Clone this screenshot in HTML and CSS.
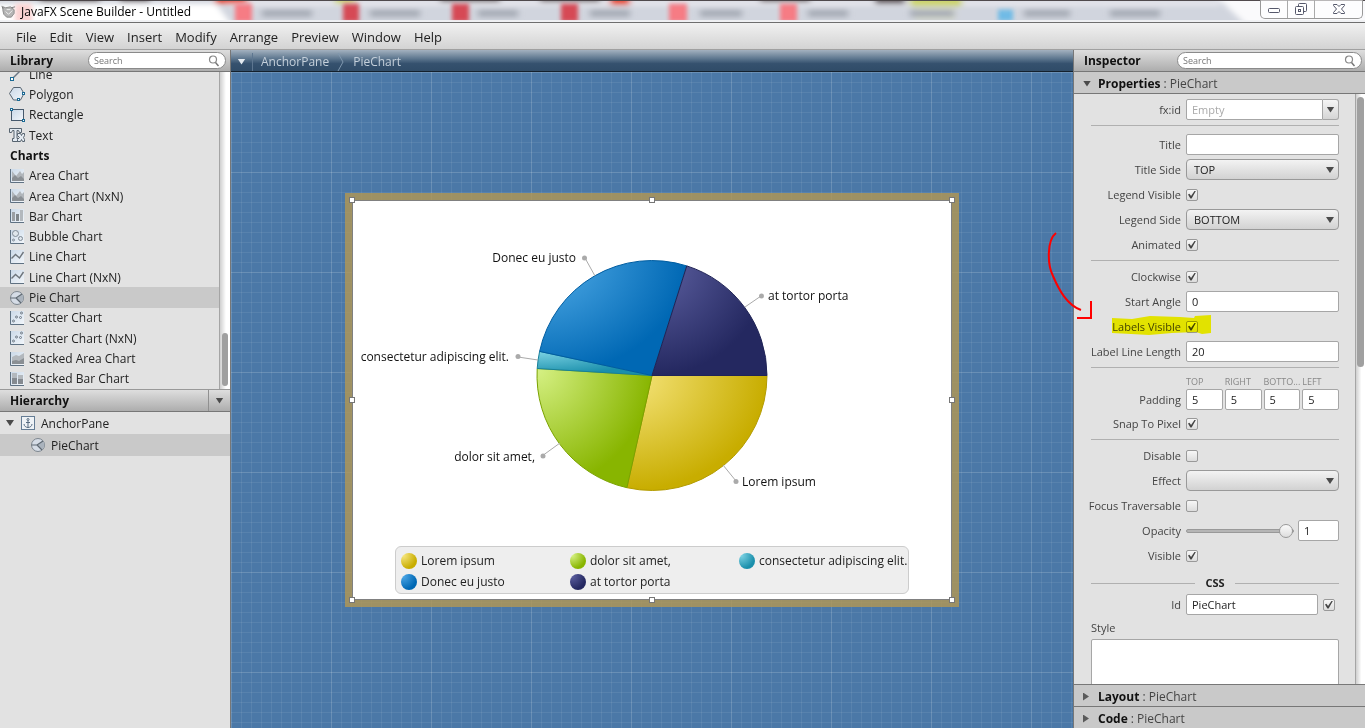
FILE: index.html
```html
<!DOCTYPE html>
<html lang="en">
<head>
  <meta charset="utf-8">
  <title>JavaFX Scene Builder - Untitled</title>
  <link rel="stylesheet" href="styles.css">
</head>
<body>
  <!-- icons shared by the library list and the hierarchy tree -->
  <svg class="defs" width="0" height="0" aria-hidden="true">
    <defs>
      <linearGradient id="iconFill" x1="0" y1="0" x2="1" y2="1">
        <stop offset="0" stop-color="#c9d8e8"/>
        <stop offset="1" stop-color="#f2f6fa"/>
      </linearGradient>
      <symbol id="i-line" viewBox="0 0 16 16">
        <path d="M3 13L13 3" stroke="#6b7784" stroke-width="1.4"/>
        <rect x="1.5" y="11.5" width="3" height="3" fill="#fff" stroke="#1b6a94"/>
        <rect x="11.5" y="1.5" width="3" height="3" fill="#fff" stroke="#1b6a94"/>
      </symbol>
      <symbol id="i-polygon" viewBox="0 0 16 16">
        <path d="M4.500 1.500h7l3.500 6-3.500 6.500h-7L.500 7.500z" fill="url(#iconFill)" stroke="#56636f"/>
        <rect x="13.500" y="6.500" width="2" height="2" fill="#fff" stroke="#1b6a94"/>
        <rect x="8.500" y="12.500" width="2" height="2" fill="#fff" stroke="#1b6a94"/>
      </symbol>
      <symbol id="i-rectangle" viewBox="0 0 16 16">
        <rect x="2.500" y="2.500" width="12" height="11" fill="url(#iconFill)" stroke="#46596c"/>
        <rect x="1.500" y="1.500" width="2" height="2" fill="#fff" stroke="#1b6a94"/>
        <rect x="13.500" y="12.500" width="2" height="2" fill="#fff" stroke="#1b6a94"/>
      </symbol>
      <symbol id="i-text" viewBox="0 0 16 16">
        <path d="M.500 1.500h12v4h-2l-1-2H8v8h2v3H3.500v-3H5v-8H3.500l-1 2h-2z" fill="#e3eaf1" stroke="#56636f"/>
        <path d="M8.500 6.500h3l1 2 1-2h2v2l-1 2 1 2v2h-2l-1-2-1 2h-3v-2l2-2-2-2z" fill="#e3eaf1" stroke="#56636f"/>
      </symbol>
      <symbol id="i-area" viewBox="0 0 16 16">
        <path d="M1 1h14v13H1z" fill="url(#iconFill)"/>
        <path d="M3 3l4 5 4-5 2 3 2-2v9H3z" fill="#b0b5ba"/>
        <path d="M3 10l3-3 3 3 3-2 3 3v2H3z" fill="#8a8f94"/>
        <path d="M1.500 1v13.500H15" fill="none" stroke="#5f7182"/>
      </symbol>
      <symbol id="i-bar" viewBox="0 0 16 16">
        <path d="M1 1h14v13H1z" fill="url(#iconFill)"/>
        <path d="M3 4h3v9H3z" fill="#9a9fa4"/>
        <path d="M7 6h3v7H7z" fill="#80868b"/>
        <path d="M11 2h3v11h-3z" fill="#b3b8bd"/>
        <path d="M1.500 1v13.500H15" fill="none" stroke="#5f7182"/>
      </symbol>
      <symbol id="i-bubble" viewBox="0 0 16 16">
        <path d="M1 1h14v13H1z" fill="url(#iconFill)"/>
        <circle cx="6.500" cy="4.500" r="3" fill="#dfe6ec" stroke="#7f8a95"/>
        <circle cx="11.500" cy="9.500" r="2" fill="#dfe6ec" stroke="#7f8a95"/>
        <circle cx="4.500" cy="11" r="1" fill="none" stroke="#7f8a95"/>
        <path d="M1.500 1v13.500H15" fill="none" stroke="#5f7182"/>
      </symbol>
      <symbol id="i-linechart" viewBox="0 0 16 16">
        <path d="M1 1h14v13H1z" fill="url(#iconFill)"/>
        <path d="M2.500 9.500l4-4 4 3.500 4-6" fill="none" stroke="#6e757c" stroke-width="1.400"/>
        <path d="M1.500 1v13.500H15" fill="none" stroke="#5f7182"/>
      </symbol>
      <symbol id="i-pie" viewBox="0 0 16 16">
        <circle cx="8" cy="8" r="6.500" fill="#d5dce6" stroke="#7d868f"/>
        <path d="M7 8l6-4a6 6 0 0 1-1 8.500z" fill="#aab3bd"/>
        <path d="M1.500 8H7l6-4M7 8l5 5" fill="none" stroke="#5e6872" stroke-width="1.200"/>
      </symbol>
      <symbol id="i-scatter" viewBox="0 0 16 16">
        <path d="M1 1h14v13H1z" fill="url(#iconFill)"/>
        <g fill="none" stroke="#6f7a86">
          <circle cx="4.500" cy="11" r="1"/>
          <circle cx="7.500" cy="7" r="1"/>
          <circle cx="11.500" cy="7.500" r="1"/>
          <circle cx="12.500" cy="3" r="1"/>
        </g>
        <path d="M1.500 1v13.500H15" fill="none" stroke="#5f7182"/>
      </symbol>
      <symbol id="i-stackarea" viewBox="0 0 16 16">
        <path d="M1 1h14v13H1z" fill="url(#iconFill)"/>
        <path d="M3 6l4-2 3 1 5-3v7L3 13z" fill="#b3b8bd"/>
        <path d="M3 10l4-1 3 1 5-3v6H3z" fill="#8a8f94"/>
        <path d="M1.500 1v13.500H15" fill="none" stroke="#5f7182"/>
      </symbol>
      <symbol id="i-stackbar" viewBox="0 0 16 16">
        <path d="M1 1h14v13H1z" fill="url(#iconFill)"/>
        <path d="M3 2h5v5H3zM9 4h5v4H9z" fill="#b3b8bd"/>
        <path d="M3 7h5v6H3zM9 8h5v5H9z" fill="#858a90"/>
        <path d="M1.500 1v13.500H15" fill="none" stroke="#5f7182"/>
      </symbol>
      <symbol id="i-anchor" viewBox="0 0 16 16">
        <rect x="1.500" y="1.500" width="13" height="13" fill="#eef2f6" stroke="#647c94"/>
        <circle cx="8" cy="4.500" r="1" fill="none" stroke="#566b80"/>
        <path d="M8 5.500v7M6 7.500h4M4 9c0 2 2 3.500 4 3.500s4-1.500 4-3.500" fill="none" stroke="#566b80"/>
      </symbol>
      <symbol id="i-search" viewBox="0 0 12 12">
        <circle cx="5" cy="4.500" r="3.500" fill="none" stroke="#888" stroke-width="1.200"/>
        <path d="M7.500 7.500L10.500 11" stroke="#777" stroke-width="1.500"/>
      </symbol>
    </defs>
  </svg>

  <header class="titlebar">
    <svg class="glass" viewBox="0 0 1365 23" preserveAspectRatio="none" aria-hidden="true">
      <defs>
        <filter id="soft" x="-5%" y="-50%" width="110%" height="200%"><feGaussianBlur stdDeviation="3"/></filter>
        <filter id="softer" x="-5%" y="-50%" width="110%" height="200%"><feGaussianBlur stdDeviation="2"/></filter>
      </defs>
      <rect width="1365" height="23" fill="#d1d5de"/>
      <g filter="url(#soft)">
        <path d="M-10 4H216l18 25H-10z" fill="#fff"/>
        <path d="M1215 -5h170v35H1250z" fill="#fafafc"/>
        <path d="M225 1H1220V6H225z" fill="#e9e8ee"/>
        <path d="M40 -4h60V2H40zM120 -4h30V2h-30zM440 -4h60V2h-60zM540 -4h60V2h-60zM760 -4h50V2h-50zM875 -4h30V4h-30z" fill="#5a5054"/>
        <path d="M215 -4h32V4h-32zM610 -4h20V5h-20z" fill="#e8452c"/>
        <path d="M335 -4h20V4h-20zM910 -4h52V6h-52z" fill="#ccd46a"/>
        <path d="M915 8h40v12h-40z" fill="#d9ddbf"/>
        <path d="M262 10h50v8h-50zM370 10h50v8h-50zM478 10h40v8h-40zM590 10h40v8h-40zM700 10h42v8h-42zM808 10h40v8h-40zM910 10h44v8h-44zM1024 10h46v8h-46zM1110 10h50v8h-50z" fill="#a9aeb8"/>
      </g>
      <g filter="url(#softer)">
        <path d="M15 4h17v20H15z" fill="#fbd3d3"/>
        <path d="M235 4h17v19h-17zM669 4h18v19h-18zM780 4h17v19h-17z" fill="#f67c84"/>
        <path d="M343 4h16v19h-16zM452 4h17v19h-17zM561 4h17v19h-17z" fill="#d64955"/>
        <path d="M998 10h15v12h-15z" fill="#6fbbe6"/>
      </g>
      <rect y="21" width="1365" height="2" fill="#f0f1f4"/>
      <rect width="1365" height="1" fill="#4a4347"/>
    </svg>
    <svg class="app-icon" viewBox="0 0 16 16" aria-hidden="true">
      <path d="M2 3l3 1 5-1 4 3v4l-3 4H6L3 11 2 7z" fill="#b5b5b5" stroke="#8b8b8b"/>
      <path d="M5 8l3 3 4-4M6 6h4" fill="none" stroke="#f2f2f2"/>
      <path d="M11 4l4-1M2 5L1 2" stroke="#777"/>
    </svg>
    <span class="title">JavaFX Scene Builder - Untitled</span>
    <div class="window-buttons">
      <button type="button" aria-label="Minimize">
        <svg width="14" height="12"><rect x="1.500" y="5.500" width="11" height="4" rx="1" fill="#fff" stroke="#55586b"/></svg>
      </button>
      <button type="button" aria-label="Restore">
        <svg width="14" height="14"><g fill="#fff" stroke="#55586b"><rect x="4.500" y="1.500" width="8" height="8" rx="1"/><rect x="1.500" y="4.500" width="8" height="8" rx="1"/><rect x="4.500" y="7.500" width="2" height="2"/></g></svg>
      </button>
      <button type="button" class="close" aria-label="Close">
        <svg width="14" height="12"><path d="M1.500 1.500h3.500l2 2 2-2h3.500v1L9.500 6l3 3.500v1H9l-2-2-2 2H1.500v-1l3-3.500-3-3.500z" fill="#fff" stroke="#55586b"/></svg>
      </button>
    </div>
  </header>

  <nav class="menubar">
    <a href="#">File</a>
    <a href="#">Edit</a>
    <a href="#">View</a>
    <a href="#">Insert</a>
    <a href="#">Modify</a>
    <a href="#">Arrange</a>
    <a href="#">Preview</a>
    <a href="#">Window</a>
    <a href="#">Help</a>
  </nav>

  <main class="workspace">
    <aside class="sidebar">
      <div class="panel-header">
        <h2>Library</h2>
        <label class="search library-search">
          <input type="text" placeholder="Search" aria-label="Search library">
          <svg><use href="#i-search"/></svg>
        </label>
      </div>
      <div class="library">
        <ul class="library-list">
          <li><svg><use href="#i-line"/></svg>Line</li>
          <li><svg><use href="#i-polygon"/></svg>Polygon</li>
          <li><svg><use href="#i-rectangle"/></svg>Rectangle</li>
          <li><svg><use href="#i-text"/></svg>Text</li>
          <li class="group">Charts</li>
          <li><svg><use href="#i-area"/></svg>Area Chart</li>
          <li><svg><use href="#i-area"/></svg>Area Chart (NxN)</li>
          <li><svg><use href="#i-bar"/></svg>Bar Chart</li>
          <li><svg><use href="#i-bubble"/></svg>Bubble Chart</li>
          <li><svg><use href="#i-linechart"/></svg>Line Chart</li>
          <li><svg><use href="#i-linechart"/></svg>Line Chart (NxN)</li>
          <li class="selected"><svg><use href="#i-pie"/></svg>Pie Chart</li>
          <li><svg><use href="#i-scatter"/></svg>Scatter Chart</li>
          <li><svg><use href="#i-scatter"/></svg>Scatter Chart (NxN)</li>
          <li><svg><use href="#i-stackarea"/></svg>Stacked Area Chart</li>
          <li><svg><use href="#i-stackbar"/></svg>Stacked Bar Chart</li>
        </ul>
        <div class="scrollbar library-scroll"><span class="thumb"></span></div>
      </div>
      <div class="panel-header hierarchy-header">
        <h2>Hierarchy</h2>
        <button type="button" class="header-menu" aria-label="Hierarchy options"><span class="arrow-down"></span></button>
      </div>
      <ul class="tree">
        <li><span class="arrow-down"></span><svg><use href="#i-anchor"/></svg>AnchorPane</li>
        <li class="child selected"><svg><use href="#i-pie"/></svg>PieChart</li>
      </ul>
    </aside>

    <section class="content">
      <div class="breadcrumb">
        <button type="button" class="crumb-menu" aria-label="Selection"><span class="arrow-down"></span></button>
        <a href="#">AnchorPane</a>
        <svg class="crumb-sep" viewBox="0 0 8 20"><path d="M1 1l5 9-5 9" fill="none" stroke="#7f97ae"/></svg>
        <a href="#">PieChart</a>
      </div>
      <div class="canvas">
        <div class="artboard">
          <svg class="pie" viewBox="0 0 600 346">
            <defs>
              <radialGradient id="gYellow" cx="0" cy="0" r="1"><stop offset="0" stop-color="#f7e67f"/><stop offset="1" stop-color="#c8ad00"/></radialGradient>
              <radialGradient id="gGreen" cx="0" cy="0" r="1"><stop offset="0" stop-color="#d6f185"/><stop offset="1" stop-color="#88b500"/></radialGradient>
              <radialGradient id="gTeal" cx="0" cy="0" r="1"><stop offset="0" stop-color="#7dd3e4"/><stop offset="1" stop-color="#1a8fab"/></radialGradient>
              <radialGradient id="gBlue" cx="0" cy="0" r="1"><stop offset="0" stop-color="#55afea"/><stop offset="1" stop-color="#0068b4"/></radialGradient>
              <radialGradient id="gNavy" cx="0" cy="0" r="1"><stop offset="0" stop-color="#5f62a3"/><stop offset="1" stop-color="#242860"/></radialGradient>
            </defs>
            <g transform="translate(300 175.500)">
              <path d="M0 0L115 0A115 115 0 0 1 -25.100 112.200Z" fill="url(#gYellow)" stroke="#b39b00"/>
              <path d="M0 0L-25.100 112.200A115 115 0 0 1 -114.800 -7Z" fill="url(#gGreen)" stroke="#7aa200"/>
              <path d="M0 0L-114.800 -7A115 115 0 0 1 -112.400 -24.100Z" fill="url(#gTeal)" stroke="#17809a"/>
              <path d="M0 0L-112.400 -24.100A115 115 0 0 1 34.800 -109.600Z" fill="url(#gBlue)" stroke="#005da1"/>
              <path d="M0 0L34.800 -109.600A115 115 0 0 1 115 0Z" fill="url(#gNavy)" stroke="#202456"/>
            </g>
            <path class="leader" d="M243 76l-10-18M393 107l16-11M186 160l-20-3M208 243l-18 13M371 265l13 16"/>
            <g fill="#aaa">
              <circle cx="232.500" cy="58" r="2.500"/>
              <circle cx="409.500" cy="96" r="2.500"/>
              <circle cx="166" cy="156.500" r="2.500"/>
              <circle cx="191" cy="256" r="2.500"/>
              <circle cx="384" cy="281.500" r="2.500"/>
            </g>
            <g class="pie-label">
              <text x="224" y="62" text-anchor="end">Donec eu justo</text>
              <text x="416" y="100">at tortor porta</text>
              <text x="157" y="161" text-anchor="end">consectetur adipiscing elit.</text>
              <text x="183" y="261" text-anchor="end">dolor sit amet,</text>
              <text x="390" y="286">Lorem ipsum</text>
            </g>
          </svg>
          <ul class="legend">
            <li><span class="dot yellow"></span>Lorem ipsum</li>
            <li><span class="dot green"></span>dolor sit amet,</li>
            <li><span class="dot teal"></span>consectetur adipiscing elit.</li>
            <li><span class="dot blue"></span>Donec eu justo</li>
            <li><span class="dot navy"></span>at tortor porta</li>
          </ul>
          <!-- resize handles -->
          <span class="handle nw"></span>
          <span class="handle n"></span>
          <span class="handle ne"></span>
          <span class="handle w"></span>
          <span class="handle e"></span>
          <span class="handle sw"></span>
          <span class="handle s"></span>
          <span class="handle se"></span>
        </div>
      </div>
    </section>

    <aside class="inspector">
      <div class="panel-header">
        <h2>Inspector</h2>
        <label class="search inspector-search">
          <input type="text" placeholder="Search" aria-label="Search properties">
          <svg><use href="#i-search"/></svg>
        </label>
      </div>
      <button type="button" class="section-header first"><span class="arrow-down"></span><b>Properties</b> : PieChart</button>
      <div class="properties">
        <form class="form">
          <div class="row">
            <label for="fxid">fx:id</label>
            <div class="combo">
              <input type="text" id="fxid" placeholder="Empty">
              <button type="button" aria-label="Show ids"><span class="arrow-down"></span></button>
            </div>
          </div>
          <hr class="wide">
          <div class="row"><label for="chartTitle">Title</label><input type="text" id="chartTitle"></div>
          <div class="row">
            <label for="titleSide">Title Side</label>
            <div class="select"><select id="titleSide"><option>TOP</option></select><span class="arrow-down"></span></div>
          </div>
          <div class="row"><label for="legendVisible">Legend Visible</label><input type="checkbox" id="legendVisible" checked></div>
          <div class="row">
            <label for="legendSide">Legend Side</label>
            <div class="select"><select id="legendSide"><option>BOTTOM</option></select><span class="arrow-down"></span></div>
          </div>
          <div class="row"><label for="animated">Animated</label><input type="checkbox" id="animated" checked></div>
          <hr>
          <div class="row"><label for="clockwise">Clockwise</label><input type="checkbox" id="clockwise" checked></div>
          <div class="row"><label for="startAngle">Start Angle</label><input type="text" id="startAngle" value="0"></div>
          <div class="row marked">
            <label for="labelsVisible">Labels Visible</label><input type="checkbox" id="labelsVisible" checked>
            <svg class="marker" viewBox="0 0 100 22" aria-hidden="true"><path d="M0 3l20 1 18-3 30 1 14 1 1-2 16-1v18l-9 1-6-2-24 1-23 2-18-1-19-1z" fill="#ff0"/></svg>
          </div>
          <div class="row"><label for="lineLength">Label Line Length</label><input type="text" id="lineLength" value="20"></div>
          <hr>
          <div class="row padding-row">
            <span class="label">Padding</span>
            <div class="insets">
              <label for="padTop">TOP</label>
              <label for="padRight">RIGHT</label>
              <label for="padBottom">BOTTO...</label>
              <label for="padLeft">LEFT</label>
              <input type="text" id="padTop" value="5">
              <input type="text" id="padRight" value="5">
              <input type="text" id="padBottom" value="5">
              <input type="text" id="padLeft" value="5">
            </div>
          </div>
          <div class="row"><label for="snap">Snap To Pixel</label><input type="checkbox" id="snap" checked></div>
          <hr>
          <div class="row"><label for="disable">Disable</label><input type="checkbox" id="disable"></div>
          <div class="row">
            <label for="effect">Effect</label>
            <div class="select"><select id="effect"><option></option></select><span class="arrow-down"></span></div>
          </div>
          <div class="row"><label for="focus">Focus Traversable</label><input type="checkbox" id="focus"></div>
          <div class="row">
            <label for="opacity">Opacity</label>
            <div class="opacity">
              <input type="range" id="opacity" min="0" max="1" step="0.1" value="1">
              <input type="text" value="1" aria-label="Opacity value">
            </div>
          </div>
          <div class="row"><label for="visible">Visible</label><input type="checkbox" id="visible" checked></div>
          <h3>CSS</h3>
          <div class="row">
            <label for="cssId">Id</label>
            <div class="css-id">
              <input type="text" id="cssId" value="PieChart">
              <input type="checkbox" aria-label="Use id" checked>
            </div>
          </div>
          <label class="style-label" for="cssStyle">Style</label>
          <textarea id="cssStyle"></textarea>
        </form>
        <div class="scrollbar"><span class="thumb"></span></div>
      </div>
      <button type="button" class="section-header"><span class="arrow-right"></span><b>Layout</b> : PieChart</button>
      <button type="button" class="section-header"><span class="arrow-right"></span><b>Code</b> : PieChart</button>
      <svg class="red-arrow" viewBox="0 0 50 96" aria-hidden="true">
        <path d="M12 7C3 14 3 38 9 50C15 64 23 79 37 84M33 92H47V75" fill="none" stroke="#f00" stroke-width="2"/>
      </svg>
    </aside>
  </main>
</body>
</html>
```
FILE: styles.css
```css
* {
  box-sizing: border-box;
}

body {
  margin: 0;
  height: 100vh;
  display: flex;
  flex-direction: column;
  overflow: hidden;
  font-family: "Open Sans", "Noto Sans", sans-serif;
  font-size: 12px;
  color: #222;
  background: #e2e2e2;
}

ul {
  list-style: none;
  margin: 0;
  padding: 0;
}

input, select, button, textarea {
  font: inherit;
  color: inherit;
  margin: 0;
}

a {
  color: inherit;
  text-decoration: none;
}

.defs {
  position: absolute;
}

/* title bar */
.titlebar {
  position: relative;
  height: 23px;
  flex: none;
  display: flex;
  align-items: center;
  border-bottom: 1px solid #6e6e6e;
  color: #000;
}

.glass {
  position: absolute;
  left: 0;
  top: 0;
  width: 100%;
  height: 100%;
  z-index: -1;
}

.app-icon {
  width: 15px;
  height: 15px;
  margin: 0 5px 0 1px;
}

.title {
  flex: 1;
}

.window-buttons {
  align-self: flex-start;
  display: flex;
  height: 19px;
  margin-right: 2px;
  border: 1px solid #999;
  border-top: 0;
  border-radius: 0 0 5px 5px;
  background: rgba(255, 255, 255, 0.6);
}

.window-buttons button {
  display: flex;
  align-items: center;
  justify-content: center;
  width: 27px;
  padding: 0;
  border: 0;
  border-right: 1px solid #aaa;
  background: none;
}

.window-buttons .close {
  width: 47px;
  border-right: 0;
}

/* menu */
.menubar {
  height: 27px;
  flex: none;
  display: flex;
  align-items: center;
  gap: 13px;
  padding: 2px 16px 0;
  font-size: 13px;
  background: linear-gradient(#f1f1f1, #d3d3d3);
  border-bottom: 1px solid #a0a0a0;
}

.workspace {
  flex: 1;
  min-height: 0;
  display: grid;
  grid-template-columns: 231px 1fr 292px;
}

/* shared panel parts */
.panel-header {
  display: flex;
  align-items: center;
  height: 22px;
  flex: none;
  padding: 0 0 0 10px;
  background: linear-gradient(#dedede, #adadad);
  border-bottom: 1px solid #777;
}

.panel-header h2 {
  margin: 0;
  flex: 1;
  font-size: 12px;
  line-height: 20px;
  color: #111;
}

.search {
  display: flex;
  align-items: center;
  height: 17px;
  padding: 0 5px;
  border: 1px solid #8a8a8a;
  border-radius: 9px;
  background: #fff;
}

.search input {
  flex: 1;
  min-width: 0;
  padding: 0;
  border: 0;
  outline: 0;
  background: none;
  font-size: 9px;
}

.search input::placeholder {
  color: #777;
}

.search svg {
  width: 12px;
  height: 12px;
}

.library-search {
  width: 138px;
  margin-right: 4px;
}

.inspector-search {
  width: 185px;
  margin-right: 3px;
}

.arrow-down {
  width: 8px;
  height: 6px;
  background: #4a4a4a;
  clip-path: polygon(0 0, 100% 0, 50% 100%);
}

.arrow-right {
  width: 6px;
  height: 8px;
  background: #5a5a5a;
  clip-path: polygon(0 0, 100% 50%, 0 100%);
}

.scrollbar {
  width: 10px;
  flex: none;
  padding: 3px 1px;
  background: linear-gradient(90deg, #cfcfcf, #fff 60%);
  border-left: 1px solid #a5a5a5;
}

.scrollbar .thumb {
  display: block;
  height: 270px;
  border-radius: 4px;
  background: #a0a0a0;
}

/* left column */
.sidebar {
  display: flex;
  flex-direction: column;
  min-height: 0;
  background: #e2e2e2;
  border-right: 1px solid #777;
}

.library {
  height: 317px;
  display: flex;
  overflow: hidden;
}

.library-list {
  flex: 1;
  display: grid;
  grid-auto-rows: 1fr;
  margin-top: -8px;
}

.library-list li, .tree li {
  display: flex;
  align-items: center;
  gap: 4px;
  padding-left: 9px;
  white-space: nowrap;
}

.library-list .group {
  padding-left: 10px;
  font-weight: bold;
  color: #111;
}

.library-list svg, .tree svg {
  width: 16px;
  height: 16px;
}

.library-list .selected, .tree .selected {
  background: #c9c9c9;
}

.library-scroll {
  width: 11px;
  padding: 0 2px;
  display: flex;
  align-items: flex-end;
}

.library-scroll .thumb {
  width: 6px;
  height: 53px;
  margin-bottom: 3px;
}

.hierarchy-header {
  height: 23px;
  border-top: 1px solid #999;
}

.header-menu {
  width: 22px;
  height: 100%;
  display: flex;
  align-items: center;
  justify-content: center;
  padding: 0;
  border: 0;
  border-left: 1px solid #909090;
  background: none;
}

.tree li {
  height: 22px;
  gap: 5px;
  padding-left: 6px;
}

.tree li .arrow-down {
  margin-right: 1px;
}

.tree .child {
  padding-left: 30px;
}

/* middle */
.content {
  display: flex;
  flex-direction: column;
  min-width: 0;
}

.breadcrumb {
  height: 22px;
  display: flex;
  align-items: center;
  padding-top: 2px;
  color: #c5d0db;
  background: linear-gradient(#a3b1bf, #5f7890 40%, #35516e 65%, #304c68);
  border-bottom: 1px solid #14202c;
}

.crumb-menu {
  width: 22px;
  height: 18px;
  margin-right: 8px;
  display: flex;
  align-items: center;
  justify-content: center;
  padding: 0;
  border: 0;
  border-right: 1px solid #5d7690;
  background: none;
}

.crumb-menu .arrow-down {
  background: #e4eaf0;
}

.crumb-sep {
  width: 8px;
  height: 20px;
  margin: 0 8px;
}

.canvas {
  flex: 1;
  display: flex;
  align-items: center;
  justify-content: center;
  background-color: #4b78a7;
  background-image:
    linear-gradient(rgba(255, 255, 255, 0.1) 1px, transparent 1px),
    linear-gradient(90deg, rgba(255, 255, 255, 0.1) 1px, transparent 1px),
    linear-gradient(rgba(255, 255, 255, 0.07) 1px, transparent 1px),
    linear-gradient(90deg, rgba(255, 255, 255, 0.07) 1px, transparent 1px);
  background-size: 100px 100px, 100px 100px, 10px 10px, 10px 10px;
}

.artboard {
  position: relative;
  width: 600px;
  height: 400px;
  background: #fff;
  outline: 1px solid #808080;
  outline-offset: -1px;
  box-shadow: 0 0 0 7px rgba(176, 150, 86, 0.83);
}

.pie {
  display: block;
  width: 100%;
}

.leader {
  fill: none;
  stroke: #aaa;
}

.pie-label {
  font-size: 12px;
  fill: #111;
}

.legend {
  width: 514px;
  margin: 0 auto;
  padding: 3px 0 1px 5px;
  display: grid;
  grid-template-columns: 1fr 1fr 1fr;
  grid-auto-rows: 21px;
  border: 1px solid #ccc;
  border-radius: 6px;
  background: #eee;
}

.legend li {
  display: flex;
  align-items: center;
  gap: 4px;
  white-space: nowrap;
}

.dot {
  width: 16px;
  height: 16px;
  border-radius: 50%;
}

.yellow { background: radial-gradient(circle at 15% 15%, #f7e67f, #c8ad00 70%); }
.green { background: radial-gradient(circle at 15% 15%, #d6f185, #88b500 70%); }
.teal { background: radial-gradient(circle at 15% 15%, #7dd3e4, #1a8fab 70%); }
.blue { background: radial-gradient(circle at 15% 15%, #4ba6e6, #0068b4 70%); }
.navy { background: radial-gradient(circle at 15% 15%, #5a5d9e, #242860 70%); }

.handle {
  position: absolute;
  width: 6px;
  height: 6px;
  margin: -3px;
  background: #fff;
  border: 1px solid #777;
}

.nw { left: 0; top: 0; }
.n { left: 50%; top: 0; }
.ne { left: 100%; top: 0; }
.w { left: 0; top: 50%; }
.e { left: 100%; top: 50%; }
.sw { left: 0; top: 100%; }
.s { left: 50%; top: 100%; }
.se { left: 100%; top: 100%; }

/* inspector */
.inspector {
  position: relative;
  display: flex;
  flex-direction: column;
  min-height: 0;
  background: #e2e2e2;
  border-left: 1px solid #777;
}

.section-header {
  height: 22px;
  flex: none;
  display: flex;
  align-items: center;
  gap: 3px;
  padding: 2px 9px 0;
  border: 0;
  border-top: 1px solid #777;
  background: #c9c9c9;
  color: #444;
}

.section-header.first {
  border-top: 0;
  border-bottom: 1px solid #777;
}

.section-header b {
  color: #111;
}

.section-header .arrow-down {
  margin-right: 4px;
}

.section-header .arrow-right {
  margin-right: 6px;
}

.properties {
  flex: 1;
  min-height: 0;
  display: flex;
  overflow: hidden;
}

.form {
  flex: 1;
  min-width: 0;
  padding: 3px 16px 0 17px;
}

.form hr {
  height: 1px;
  margin: 3px 0;
  border: 0;
  background: #b0b0b0;
}

.form .wide {
  margin-bottom: 6px;
}

.row {
  display: grid;
  grid-template-columns: 90px minmax(0, 1fr);
  column-gap: 5px;
  align-items: center;
  height: 25px;
}

.row > label, .row > .label {
  justify-self: end;
  white-space: nowrap;
  font-size: 11px;
  color: #444;
}

.form input[type="text"], .form textarea {
  width: 100%;
  min-width: 0;
  height: 21px;
  padding: 0 5px;
  border: 1px solid #a6a6a6;
  border-radius: 2px;
  background: #fff;
  font-size: 11px;
}

.form input::placeholder {
  color: #aaa;
}

.form input[type="checkbox"] {
  appearance: none;
  width: 12px;
  height: 12px;
  border: 1px solid #999;
  border-radius: 2px;
  background: linear-gradient(#f7f7f7, #dcdcdc);
}

.form input[type="checkbox"]:checked::before {
  content: "";
  display: block;
  width: 8px;
  height: 8px;
  margin: 1px;
  background: #444;
  clip-path: polygon(0 50%, 18% 42%, 38% 68%, 85% 0, 100% 4%, 45% 100%, 30% 100%);
}

.combo {
  display: flex;
}

.combo input[type="text"] {
  border-radius: 2px 0 0 2px;
}

.combo button {
  width: 16px;
  flex: none;
  display: flex;
  align-items: center;
  justify-content: center;
  padding: 0;
  border: 1px solid #a6a6a6;
  border-left: 0;
  border-radius: 0 3px 3px 0;
  background: linear-gradient(#f5f5f5, #d5d5d5);
}

.select {
  position: relative;
}

.select select {
  display: block;
  appearance: none;
  width: 100%;
  height: 21px;
  padding: 0 7px;
  border: 1px solid #999;
  border-radius: 4px;
  background: linear-gradient(#f3f3f3, #d2d2d2);
  font-size: 11px;
}

.select .arrow-down {
  position: absolute;
  right: 5px;
  top: 8px;
  pointer-events: none;
}

.marked {
  position: relative;
}

.marker {
  position: absolute;
  left: 21px;
  top: 1px;
  width: 100px;
  height: 22px;
  mix-blend-mode: multiply;
  pointer-events: none;
}

.padding-row {
  height: 40px;
  padding-bottom: 1px;
  align-items: end;
}

.padding-row .label {
  line-height: 21px;
}

.insets {
  display: grid;
  grid-template-columns: repeat(4, minmax(0, 1fr));
  column-gap: 2px;
}

.insets label {
  font-size: 9px;
  line-height: 14px;
  white-space: nowrap;
  color: #888;
}

.opacity {
  display: flex;
  align-items: center;
  gap: 4px;
}

.form .opacity input[type="text"] {
  width: 41px;
  flex: none;
}

.opacity input[type="range"] {
  appearance: none;
  flex: 1;
  min-width: 0;
  height: 15px;
  background: none;
}

.opacity input[type="range"]::-webkit-slider-runnable-track {
  height: 4px;
  border: 1px solid #999;
  border-radius: 2px;
  background: #b5b5b5;
}

.opacity input[type="range"]::-webkit-slider-thumb {
  appearance: none;
  width: 14px;
  height: 14px;
  margin-top: -6px;
  border: 1px solid #999;
  border-radius: 50%;
  background: linear-gradient(#fafafa, #dedede);
}

.form h3 {
  display: flex;
  align-items: center;
  gap: 10px;
  margin: 6px 0 0;
  font-size: 11px;
  line-height: 18px;
}

.form h3::before, .form h3::after {
  content: "";
  flex: 1;
  height: 1px;
  background: #b0b0b0;
}

.css-id {
  display: flex;
  align-items: center;
  gap: 5px;
  padding-right: 4px;
}

.form .css-id input[type="checkbox"] {
  flex: none;
}

.style-label {
  display: block;
  font-size: 11px;
  line-height: 22px;
  color: #444;
}

.form textarea {
  display: block;
  height: 80px;
  resize: none;
}

.red-arrow {
  position: absolute;
  left: -30px;
  top: 176px;
  width: 50px;
  height: 96px;
  pointer-events: none;
}
```
